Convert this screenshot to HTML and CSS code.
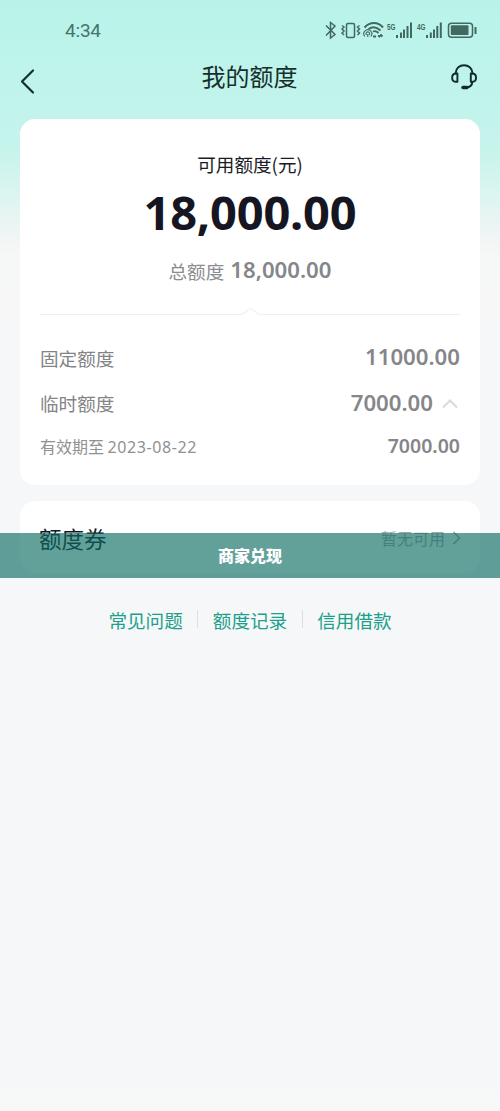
FILE: index.html
```html
<!DOCTYPE html>
<html lang="zh-CN">
<head>
<meta charset="utf-8">
<title>我的额度</title>
<link rel="stylesheet" href="styles.css">
</head>
<body>
<div class="page">
  <div class="status">
    <span class="time">4:34</span>
    <svg class="status-icons" width="160" height="24" viewBox="320 18 160 24" fill="none" stroke="#42695f" stroke-width="1.5">
      <path d="M326 25.500L335 34.500L330.500 38V22.500L335 26L326 35.500"/>
      <rect x="346.500" y="23.500" width="8" height="14" rx="1.500"/>
      <path d="M342 25.500l2 1.500-2 2 2 2-2 2 2 2M359.500 25.500l-2 1.500 2 2-2 2 2 2-2 2"/>
      <path d="M364.500 27.500C370 21.500 378 21.500 383 27.500" stroke-width="2"/>
      <path d="M368.500 29C373 26 377 27 380.500 30.500" stroke-width="2"/>
      <path d="M373 31.500Q376 30.500 378.500 33" stroke-width="1.800"/>
      <path d="M364.800 36.500a4 4 0 1 1 6 0M366.500 35a1.800 1.800 0 1 1 2.600 0M367.800 34v3" stroke-width="1.100"/>
      <path d="M373 36.500h3M378 35.500l1.500 1 1.500-1.500 1.500 1.500" stroke-width="1.800"/>
      <path d="M397 35v3M401 32.500V38M404 29.500V38M407.500 26V38M411 22.500V38" stroke-width="2"/>
      <path d="M427 35v3M430.800 32.500V38M434 29.500V38M437.300 26V38M440.800 22.500V38" stroke-width="2"/>
      <rect x="448.500" y="23.200" width="24" height="14" rx="3"/>
      <rect x="450.800" y="25.300" width="17.700" height="9.800" rx="1" fill="#42695f" stroke="none"/>
      <path d="M475.500 27v7" stroke-width="2"/>
      <g class="net" stroke="none" fill="#42695f">
        <text x="387" y="29.500" textLength="8.500" lengthAdjust="spacingAndGlyphs">5G</text>
        <text x="417" y="29.500" textLength="8.500" lengthAdjust="spacingAndGlyphs">4G</text>
      </g>
    </svg>
  </div>
  <header class="nav">
    <svg width="18" height="28" viewBox="0 0 18 28" fill="none" stroke="#14302c" stroke-width="2.200" stroke-linecap="round" stroke-linejoin="round"><path d="M13 3.500L2 14.500l11 11"/></svg>
    <h1 class="title">我的额度</h1>
    <svg width="28" height="28" viewBox="450 62 28 28" fill="none" stroke="#102b28" stroke-width="1.900" stroke-linecap="round" stroke-linejoin="round">
      <path d="M455.500 72.500C456 61.500 472 61.500 472.700 72.500"/>
      <path d="M457.400 72.500v8.300h-1.800c-4.600-.5-4.600-7.800 0-8.300zM470.800 72.500v8.300h1.800c4.600-.5 4.600-7.800 0-8.300zM472.400 81c-.5 3.500-2 5-5 5.300"/>
      <path d="M463 86.500h4" stroke-width="3.400"/>
    </svg>
  </header>

  <main class="content">
    <section class="card quota">
      <p class="caption">可用额度(元)</p>
      <p class="amount">18,000.00</p>
      <p class="total"><span>总额度</span><b class="num">18,000.00</b></p>
      <svg class="divider" width="420" height="10" viewBox="0 0 420 10" fill="none" stroke="#efeff1" stroke-width="1.200"><path d="M0 7.500H200C206 7.500 207 1.500 210.500 1.500S215 7.500 221 7.500H420"/></svg>
      <div class="row fixed"><span>固定额度</span><b class="num">11000.00</b></div>
      <div class="row temp"><span>临时额度</span>
        <span class="value"><b class="num">7000.00</b>
        <svg width="18" height="12" viewBox="0 0 18 12" fill="none" stroke="#dadadc" stroke-width="2"><path d="M1 10.500l7-7 7 7"/></svg></span>
      </div>
      <div class="row detail"><span>有效期至 <span class="date">2023-08-22</span></span><b class="num">7000.00</b></div>
    </section>

    <section class="card coupon">
      <h2 class="coupon-title">额度券</h2>
      <span class="coupon-state">暂无可用<svg width="10" height="16" viewBox="0 0 10 16" fill="none" stroke="#a2a4a6" stroke-width="1.600"><path d="M1.500 2l6 6-6 6"/></svg></span>
    </section>

    <nav class="links"><a>常见问题</a><i></i><a>额度记录</a><i></i><a>信用借款</a></nav>
  </main>
  <div class="banner">商家兑现</div>
</div>
</body>
</html>
```
FILE: styles.css
```css
* { box-sizing: border-box; }
body, h1, h2, p { margin: 0; }
body { font-family: "Noto Sans CJK SC", sans-serif; }
.page {
  position: relative;
  height: 1111px;
  overflow: hidden;
  background: linear-gradient(#b8f3e9 0, #c2f4ec 115px, #c6f4ec 150px, #d9f5f0 190px, #ebf5f3 225px, #f6f7f7 255px, #f7f7f7 315px, #f5f7f9 330px, #f5f7f9 1070px, #f8f8f8 1111px);
}
.status {
  display: flex;
  justify-content: space-between;
  align-items: center;
  height: 42px;
  padding: 18px 20px 0 65px;
}
.time { font: 19px/24px Roboto, sans-serif; letter-spacing: -.2px; color: #47736a; padding-top: 2px; }
.status-icons { display: block; }
.net { font: 700 9px "Liberation Sans", sans-serif; }
.nav {
  display: flex;
  justify-content: space-between;
  align-items: center;
  height: 76px;
  margin-bottom: 1px;
  padding: 0 22px 7px 20px;
}
.nav svg:first-child { margin: 8px 10px 0 0; }
.title { font-size: 24px; font-weight: 400; line-height: 36px; padding: 0 0 1px 1px; color: #172f2c; }
.content { padding: 0 20px; }
.card { background: #fff; border-radius: 15px; }
.quota { height: 366px; padding: 31px 20px 0; }
.num { font-family: "Noto Sans", sans-serif; font-size: 22.200px; font-weight: 600; line-height: 30px; color: #85868a; }
.caption { font-size: 18.600px; line-height: 28px; text-align: center; color: #1b1c25; }
.amount {
  font: 700 47px/56px "Noto Sans", sans-serif;
  letter-spacing: -.2px;
  margin-top: 6px;
  text-align: center;
  color: #151622;
}
.total {
  display: flex;
  justify-content: center;
  align-items: center;
  gap: 6px;
  height: 30px;
  margin-top: 15px;
  font-size: 18.600px;
  color: #8b8c8f;
}
.divider { display: block; margin-top: 22px; }
.row {
  display: flex;
  justify-content: space-between;
  align-items: center;
  font-size: 18.600px;
  color: #838487;
}
.fixed { height: 46px; margin-top: 17px; }
.temp { height: 45px; }
.value { display: flex; align-items: center; gap: 9px; }
.detail { height: 41px; font-size: 16px; color: #8f9093; }
.detail .num { font-size: 19.500px; }
.date { font-family: "Noto Sans", sans-serif; font-size: 16px; letter-spacing: .6px; }
.coupon {
  display: flex;
  justify-content: space-between;
  height: 72px;
  margin-top: 16px;
  padding: 19px 18px 0 19px;
}
.coupon-title { font-size: 22.500px; font-weight: 400; line-height: 36px; color: #14151f; }
.coupon-state { display: flex; align-items: center; gap: 7px; height: 36px; font-size: 16px; color: #a6a7a9; }
.links {
  display: flex;
  justify-content: center;
  align-items: center;
  gap: 14.500px;
  height: 30px;
  margin-top: 31px;
  font-size: 18.600px;
  color: #1d9f8a;
}
.links i { width: 1px; height: 18px; background: #dedfe2; }
.banner {
  position: absolute;
  top: 533px;
  left: 0;
  width: 100%;
  height: 45px;
  background: rgba(14, 109, 100, .65);
  color: #fff;
  font-size: 16px;
  font-weight: 900;
  line-height: 45px;
  text-align: center;
}
```
